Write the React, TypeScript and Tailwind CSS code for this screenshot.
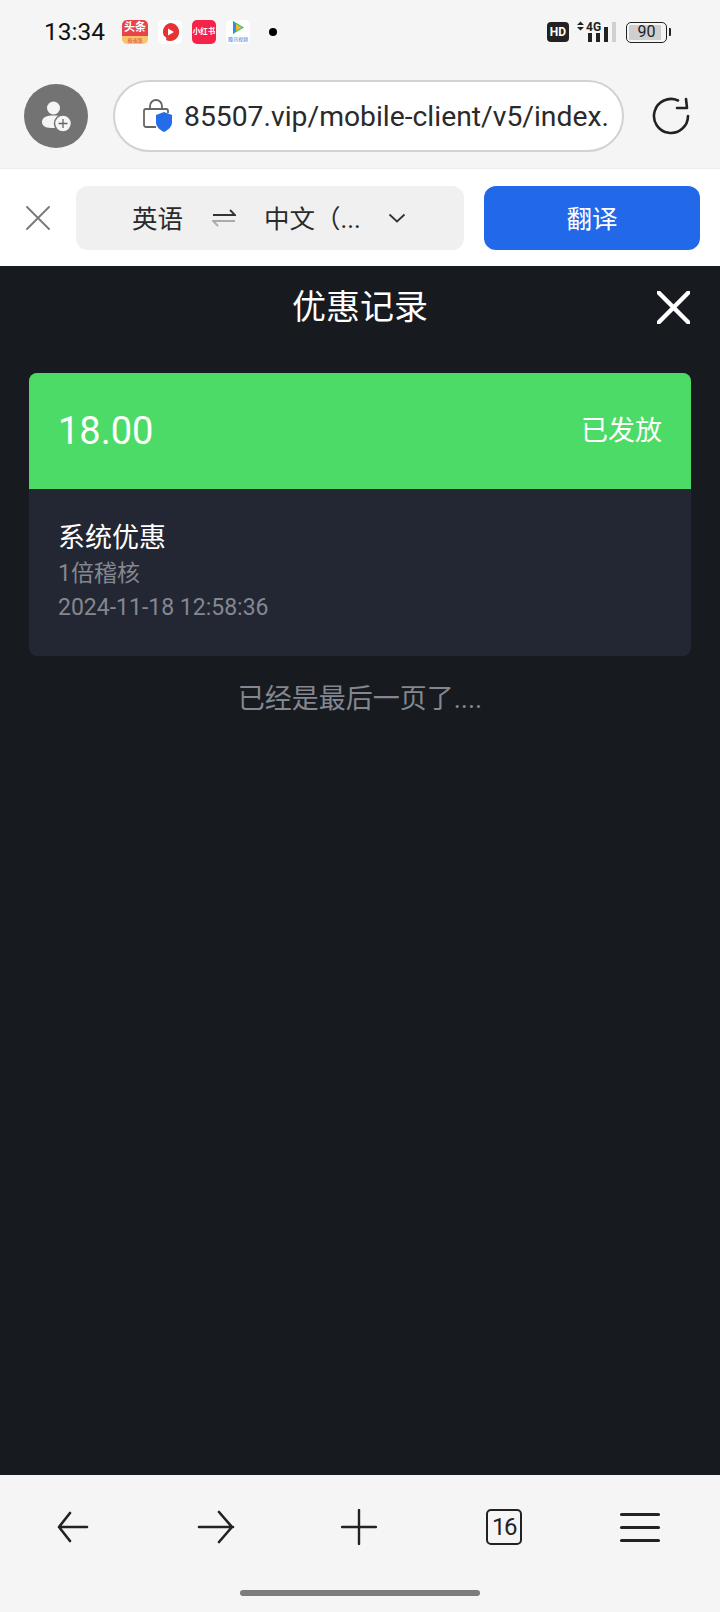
const font = "font-['Roboto','Noto_Sans_CJK_SC',sans-serif]";

function Cross({ size, stroke, color }: { size: number; stroke: number; color: string }) {
  return (
    <svg width={size} height={size} viewBox="0 0 24 24" className="shrink-0">
      <path d="M1 1l22 22M23 1L1 23" fill="none" stroke={color} strokeWidth={stroke} strokeLinecap="round" />
    </svg>
  );
}

function AppIcons() {
  return (
    <div className="flex items-center ml-[17px] gap-[10px]">
      <div className="w-[26px] h-[24px] rounded-[5px] bg-[#fdf3ea] overflow-hidden flex flex-col items-center">
        <div className="w-full h-[16px] bg-[#e8434a] text-white text-[11px] leading-[16px] font-bold text-center">头条</div>
        <div className="w-full h-[8px] bg-[#f9c56c] text-[#d94a3a] text-[5px] leading-[8px] text-center">极速版</div>
      </div>
      <div className="w-[24px] h-[24px] rounded-[5px] bg-white flex items-center justify-center">
        <svg width="20" height="20" viewBox="0 0 20 20">
          <path d="M10 1a9 9 0 1 1-4 17c1-2 0-3-2-4A9 9 0 0 1 10 1z" fill="#e63232" />
          <path d="M8 6.500l6 3.500-6 3.500z" fill="#fff" />
        </svg>
      </div>
      <div className="w-[24px] h-[24px] rounded-[5px] bg-[#f5234a] text-white text-[7.500px] leading-[24px] font-bold text-center whitespace-nowrap">小红书</div>
      <div className="w-[24px] h-[24px] rounded-[5px] bg-white flex flex-col items-center">
        <svg width="16" height="15" viewBox="0 0 16 15">
          <path d="M3 1l11 6.500L3 14z" fill="#2cc46b" />
          <path d="M6 4l6 3.500L6 11z" fill="#f3b92e" />
          <path d="M3 1l3 3v7l-3 3z" fill="#2a8ff0" />
        </svg>
        <div className="text-[#3f7fd8] text-[5px] leading-[8px] whitespace-nowrap">腾讯视频</div>
      </div>
    </div>
  );
}

function StatusBar() {
  return (
    <div className="h-[64px] flex items-center pl-[44px] pr-[49px] justify-between">
      <div className="flex items-center">
        <span className="text-[24.500px] leading-none text-[#111]">13:34</span>
        <AppIcons />
        <div className="w-[8px] h-[8px] rounded-full bg-black ml-[19px]" />
      </div>
      <div className="flex items-center">
        <div className="w-[22px] h-[20px] rounded-[4px] bg-[#222] text-white text-[12px] leading-[20px] font-bold text-center">HD</div>
        <svg width="44" height="24" viewBox="0 0 44 24" className="ml-[4px]">
          <path d="M4 5l3.500-3.500L11 5zM4 7l3.500 3.500L11 7z" fill="#222" />
          <text x="13" y="11" fontSize="12" fontWeight="700" fill="#222" fontFamily="Roboto">4G</text>
          <rect x="15" y="13" width="4" height="9" fill="#222" />
          <rect x="23" y="13" width="4" height="9" fill="#222" />
          <rect x="31" y="7" width="4" height="15" fill="#222" />
          <rect x="39" y="2" width="4" height="20" fill="#d0d0d0" />
        </svg>
        <div className="ml-[9px] w-[41px] h-[21px] rounded-[5px] border-[1.500px] border-[#222] p-[2px] relative flex">
          <div className="w-[32px] h-full bg-[#cfcfcf] rounded-[1px]" />
          <span className="absolute inset-0 text-center text-[16px] leading-[18px] text-[#222]">90</span>
        </div>
        <div className="w-[2px] h-[8px] bg-[#222] ml-[2px] rounded-r-[1px]" />
      </div>
    </div>
  );
}

function UrlBar() {
  return (
    <div className="h-[104px] flex items-center pl-[24px]">
      <div className="w-[64px] h-[64px] rounded-full bg-[#737373] flex items-center justify-center shrink-0">
        <svg width="34" height="34" viewBox="0 0 34 34">
          <circle cx="14.500" cy="9" r="6.500" fill="#f5f5f5" />
          <path d="M3 23c0-5 5-6.500 11.500-6.500S26 18 26 23s-5 6-11.500 6S3 28 3 23z" fill="#f5f5f5" />
          <circle cx="24" cy="24.500" r="8.500" fill="#f5f5f5" stroke="#737373" strokeWidth="1.500" />
          <path d="M24 20v9M19.500 24.500h9" stroke="#666" strokeWidth="1.300" />
        </svg>
      </div>
      <div className="ml-[25px] w-[511px] h-[72px] rounded-full bg-white border-2 border-[#d2d2d2] flex items-center pl-[27px] shrink-0">
        <svg width="32" height="34" viewBox="0 0 32 34" className="shrink-0">
          <path d="M8 10V7a6 6 0 0 1 12 0v3" fill="none" stroke="#666" strokeWidth="1.800" />
          <path d="M14 28H4a2 2 0 0 1-2-2V12a2 2 0 0 1 2-2h20a2 2 0 0 1 2 2v2" fill="none" stroke="#666" strokeWidth="1.800" />
          <path d="M22 13l8 3v7c0 5-4 8-8 10-4-2-8-5-8-10v-7z" fill="#256de8" />
        </svg>
        <span className="ml-[10px] pt-[3px] text-[28.300px] leading-none text-[#2a2a2a] whitespace-nowrap">85507.vip/mobile-client/v5/index.</span>
      </div>
      <svg width="38" height="38" viewBox="0 0 38 38" className="ml-[28px] shrink-0">
        <path d="M26 3.500A17 17 0 1 0 36 19" fill="none" stroke="#222" strokeWidth="2.600" strokeLinecap="round" />
        <path d="M25 11h10l-1-9" fill="none" stroke="#222" strokeWidth="2.600" strokeLinejoin="round" strokeLinecap="round" />
      </svg>
    </div>
  );
}

function TranslateBar() {
  return (
    <div className="h-[98px] bg-white border-t border-[#ececec] flex items-center pl-[26px]">
      <Cross size={24} stroke={1.800} color="#777" />
      <div className="ml-[26px] w-[388px] h-[64px] rounded-[12px] bg-[#f0f0f0] flex items-center pl-[56px] text-[25.500px] text-[#2a2a2a] shrink-0">
        <span className="pt-[3px]">英语</span>
        <svg width="24" height="20" viewBox="0 0 24 20" className="ml-[29px]">
          <path d="M1 7h22l-5-5" fill="none" stroke="#333" strokeWidth="1.800" />
          <path d="M23 13H1l5 5" fill="none" stroke="#aaa" strokeWidth="1.800" />
        </svg>
        <span className="ml-[28px] pt-[3px] whitespace-nowrap">中文（...</span>
        <svg width="18" height="10" viewBox="0 0 18 10" className="ml-[27px]">
          <path d="M1.500 1.500L9 8.500l7.500-7" fill="none" stroke="#333" strokeWidth="1.800" />
        </svg>
      </div>
      <button className="ml-[20px] w-[216px] h-[64px] rounded-[12px] bg-[#2169e8] text-white text-[25.500px] pt-[3px] shrink-0">翻译</button>
    </div>
  );
}

function BottomNav() {
  return (
    <div className="h-[137px] bg-[#f5f5f5] flex flex-col items-center">
      <div className="w-full h-[106px] flex items-center pl-[57px] pb-[2px]">
        <svg width="32" height="32" viewBox="0 0 32 32">
          <path d="M30 16H2M13 2L2 16l11 14" fill="none" stroke="#222" strokeWidth="2.600" strokeLinecap="round" strokeLinejoin="round" />
        </svg>
        <svg width="38" height="34" viewBox="0 0 38 34" className="ml-[108px]">
          <path d="M2 17h34M22 2l13 15-13 15" fill="none" stroke="#222" strokeWidth="2.600" strokeLinecap="round" strokeLinejoin="round" />
        </svg>
        <svg width="36" height="36" viewBox="0 0 36 36" className="ml-[106px]">
          <path d="M18 1v34M1 18h34" fill="none" stroke="#222" strokeWidth="2.400" strokeLinecap="round" />
        </svg>
        <div className="ml-[109px] w-[36px] h-[36px] rounded-[5px] border-2 border-[#222] text-[#222] text-[24px] leading-[32px] text-center tracking-[-1.500px]">16</div>
        <div className="ml-[98px] w-[40px] flex flex-col gap-[10px]">
          <div className="h-[3px] rounded-full bg-[#222]" />
          <div className="h-[3px] rounded-full bg-[#222]" />
          <div className="h-[3px] rounded-full bg-[#222]" />
        </div>
      </div>
      <div className="w-[240px] h-[6px] rounded-full bg-[#7c7c7c] mt-[9px]" />
    </div>
  );
}

export default function App() {
  return (
    <div className={`w-[720px] h-[1612px] flex flex-col bg-[#f5f5f5] overflow-hidden ${font}`}>
      <StatusBar />
      <UrlBar />
      <TranslateBar />
      <div className="flex-1 bg-[#171a1f] flex flex-col">
        <div className="h-[80px] flex items-center justify-center relative">
          <h1 className="text-[34px] leading-none text-white pt-[1px]">优惠记录</h1>
          <div className="absolute right-[30px] top-[25px]">
            <Cross size={33} stroke={3.200} color="#fff" />
          </div>
        </div>
        <div className="mt-[27px] mx-[29px] rounded-[8px] overflow-hidden bg-[#232733]">
          <div className="h-[116px] bg-[#4cdb66] flex items-center justify-between px-[29px] text-white">
            <span className="text-[38px] leading-none pb-[1px]">18.00</span>
            <span className="text-[27px] leading-none pt-[1px]">已发放</span>
          </div>
          <div className="h-[167px] pl-[29px] pt-[31px]">
            <div className="text-[27px] leading-[36px] text-white">系统优惠</div>
            <div className="text-[23px] leading-[34px] pt-[1px] text-[#84878f]">1倍稽核</div>
            <div className="text-[23px] leading-[34px] text-[#84878f]">2024-11-18 12:58:36</div>
          </div>
        </div>
        <div className="mt-[25px] text-center text-[27px] leading-[36px] text-[#84878f]">已经是最后一页了....</div>
      </div>
      <BottomNav />
    </div>
  );
}
